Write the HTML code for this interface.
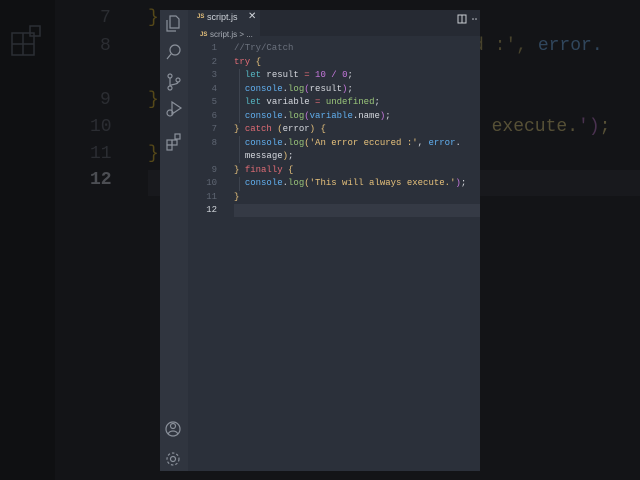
<!DOCTYPE html>
<html><head><style>
body{margin:0;width:640px;height:480px;background:#131417;position:relative;overflow:hidden;font-family:"Liberation Mono",monospace}
.a{position:absolute}
.side{font-size:18px;color:#2b2d32;white-space:pre}
.code{font-size:9px;white-space:pre;line-height:13.5px}
.ln{color:#5f6673;text-align:right;width:20px}
.k{color:#e06c75}.v{color:#d5d8de}.c{color:#61afef}.f{color:#98c379}.n{color:#c678dd}.s{color:#e5c07b}.y{color:#e5c07b}.p{color:#c678dd}.cm{color:#6b717d}.u{color:#56b6c2}.t{color:#56b6c2}
</style></head><body>
<div class="a" style="left:0;top:0;width:55px;height:480px;background:#0f1012"></div>
<div class="a" style="left:148px;top:170px;width:492px;height:26px;background:#18191d"></div>
<svg class="a" style="left:10px;top:25px" width="34" height="32"><g fill="none" stroke="#2c2f34" stroke-width="1.5"><rect x="2" y="8" width="22" height="22"/><path d="M2 19h22M13 8v22"/><rect x="20" y="1" width="10" height="10"/></g></svg>
<div class="a side" style="left:100px;top:8px">7</div>
<div class="a side" style="left:100px;top:36px">8</div>
<div class="a side" style="left:100px;top:90px">9</div>
<div class="a side" style="left:90px;top:117px">10</div>
<div class="a side" style="left:90px;top:144px">11</div>
<div class="a side" style="left:90px;top:170px;color:#4c4e53;font-weight:bold">12</div>
<div class="a side" style="left:148px;top:8px;color:#554818">}</div>
<div class="a side" style="left:148px;top:90px;color:#554818">}</div>
<div class="a side" style="left:148px;top:144px;color:#554818">}</div>
<div class="a side" style="left:473px;top:36px;color:#48432c">d :', <span style="color:#30465c">error.</span></div>
<div class="a side" style="left:470px;top:117px;color:#565036">, execute.<span style="color:#4a3250">')</span>;</div>

<div class="a" style="left:160px;top:10px;width:320px;height:461px;background:#2b303a"></div>
<div class="a" style="left:160px;top:10px;width:28px;height:461px;background:#30353f"></div>
<div class="a" style="left:188px;top:10px;width:292px;height:26px;background:#262a33"></div>
<div class="a" style="left:188px;top:10px;width:72px;height:26px;background:#2b303a"></div>
<div class="a" style="left:197px;top:14px;font:bold 6px 'Liberation Sans',sans-serif;color:#e5c07b">JS</div>
<div class="a" style="left:207px;top:12px;font:9px 'Liberation Sans',sans-serif;color:#d0d4da">script.js</div>
<div class="a" style="left:248px;top:11px;font:10px 'Liberation Sans',sans-serif;color:#d0d4da">✕</div>
<svg class="a" style="left:457px;top:14px" width="22" height="10"><rect x="1" y="1" width="8" height="8" fill="none" stroke="#c8ccd2"/><path d="M5 1v8" stroke="#c8ccd2"/><circle cx="16" cy="5" r=".8" fill="#c8ccd2"/><circle cx="19" cy="5" r=".8" fill="#c8ccd2"/></svg>
<div class="a" style="left:200px;top:32px;font:bold 6px 'Liberation Sans',sans-serif;color:#e5c07b">JS</div>
<div class="a" style="left:210px;top:30px;font:8px 'Liberation Sans',sans-serif;color:#a8adb5">script.js &gt; ...</div>
<svg class="a" style="left:164px;top:12px" width="20" height="460" fill="none" stroke="#8a909a" stroke-width="1.2">
<path d="M6 4h6l3 3v9H6z M3 8v11h9"/>
<circle cx="11" cy="38" r="5"/><path d="M7 42l-4 5"/>
<circle cx="6" cy="64" r="2"/><circle cx="6" cy="76" r="2"/><circle cx="14" cy="68" r="2"/><path d="M6 66v8M14 70c0 3-8 2-8 4"/>
<path d="M8 90l9 6-9 6z"/><circle cx="6" cy="101" r="3"/>
<rect x="3" y="128" width="5" height="5"/><rect x="8" y="128" width="5" height="5"/><rect x="3" y="133" width="5" height="5"/><rect x="11" y="122" width="5" height="5"/>
<circle cx="9" cy="417" r="7"/><circle cx="9" cy="414" r="2.5"/><path d="M4 422c2-4 8-4 10 0"/>
<circle cx="9" cy="447" r="2.5"/><circle cx="9" cy="447" r="6" stroke-dasharray="2.5 2"/>
</svg>
<div class="a" style="left:234px;top:204px;width:246px;height:13px;background:#353a45"></div>
<div class="a" style="left:239px;top:69px;width:1px;height:54px;background:#3d434e"></div>
<div class="a" style="left:239px;top:136px;width:1px;height:27px;background:#3d434e"></div>
<div class="a" style="left:239px;top:177px;width:1px;height:14px;background:#3d434e"></div>
<div class="a code ln" style="left:197px;top:42px">1
2
3
4
5
6
7
8

9
10
11
<span style="color:#d0d4da">12</span></div>
<div class="a code" style="left:234px;top:42px"><span class="cm">//Try/Catch</span>
<span class="k">try</span> <span class="y">{</span>
  <span class="t">let</span> <span class="v">result</span> <span class="k">=</span> <span class="n">10</span> <span class="n">/</span> <span class="n">0</span><span class="v">;</span>
  <span class="c">console</span><span class="v">.</span><span class="f">log</span><span class="n">(</span><span class="v">result</span><span class="n">)</span><span class="v">;</span>
  <span class="t">let</span> <span class="v">variable</span> <span class="k">=</span> <span class="f">undefined</span><span class="v">;</span>
  <span class="c">console</span><span class="v">.</span><span class="f">log</span><span class="n">(</span><span class="c">variable</span><span class="v">.name</span><span class="n">)</span><span class="v">;</span>
<span class="y">}</span> <span class="k">catch</span> <span class="y">(</span><span class="v">error</span><span class="y">)</span> <span class="y">{</span>
  <span class="c">console</span><span class="v">.</span><span class="f">log</span><span class="y">(</span><span class="s">'An error eccured :'</span><span class="v">,</span> <span class="c">error</span><span class="v">.</span>
  <span class="v">message</span><span class="y">)</span><span class="v">;</span>
<span class="y">}</span> <span class="k">finally</span> <span class="y">{</span>
  <span class="c">console</span><span class="v">.</span><span class="f">log</span><span class="y">(</span><span class="s">'This will always execute.'</span><span class="p">)</span><span class="v">;</span>
<span class="y">}</span></div>
</body></html>
